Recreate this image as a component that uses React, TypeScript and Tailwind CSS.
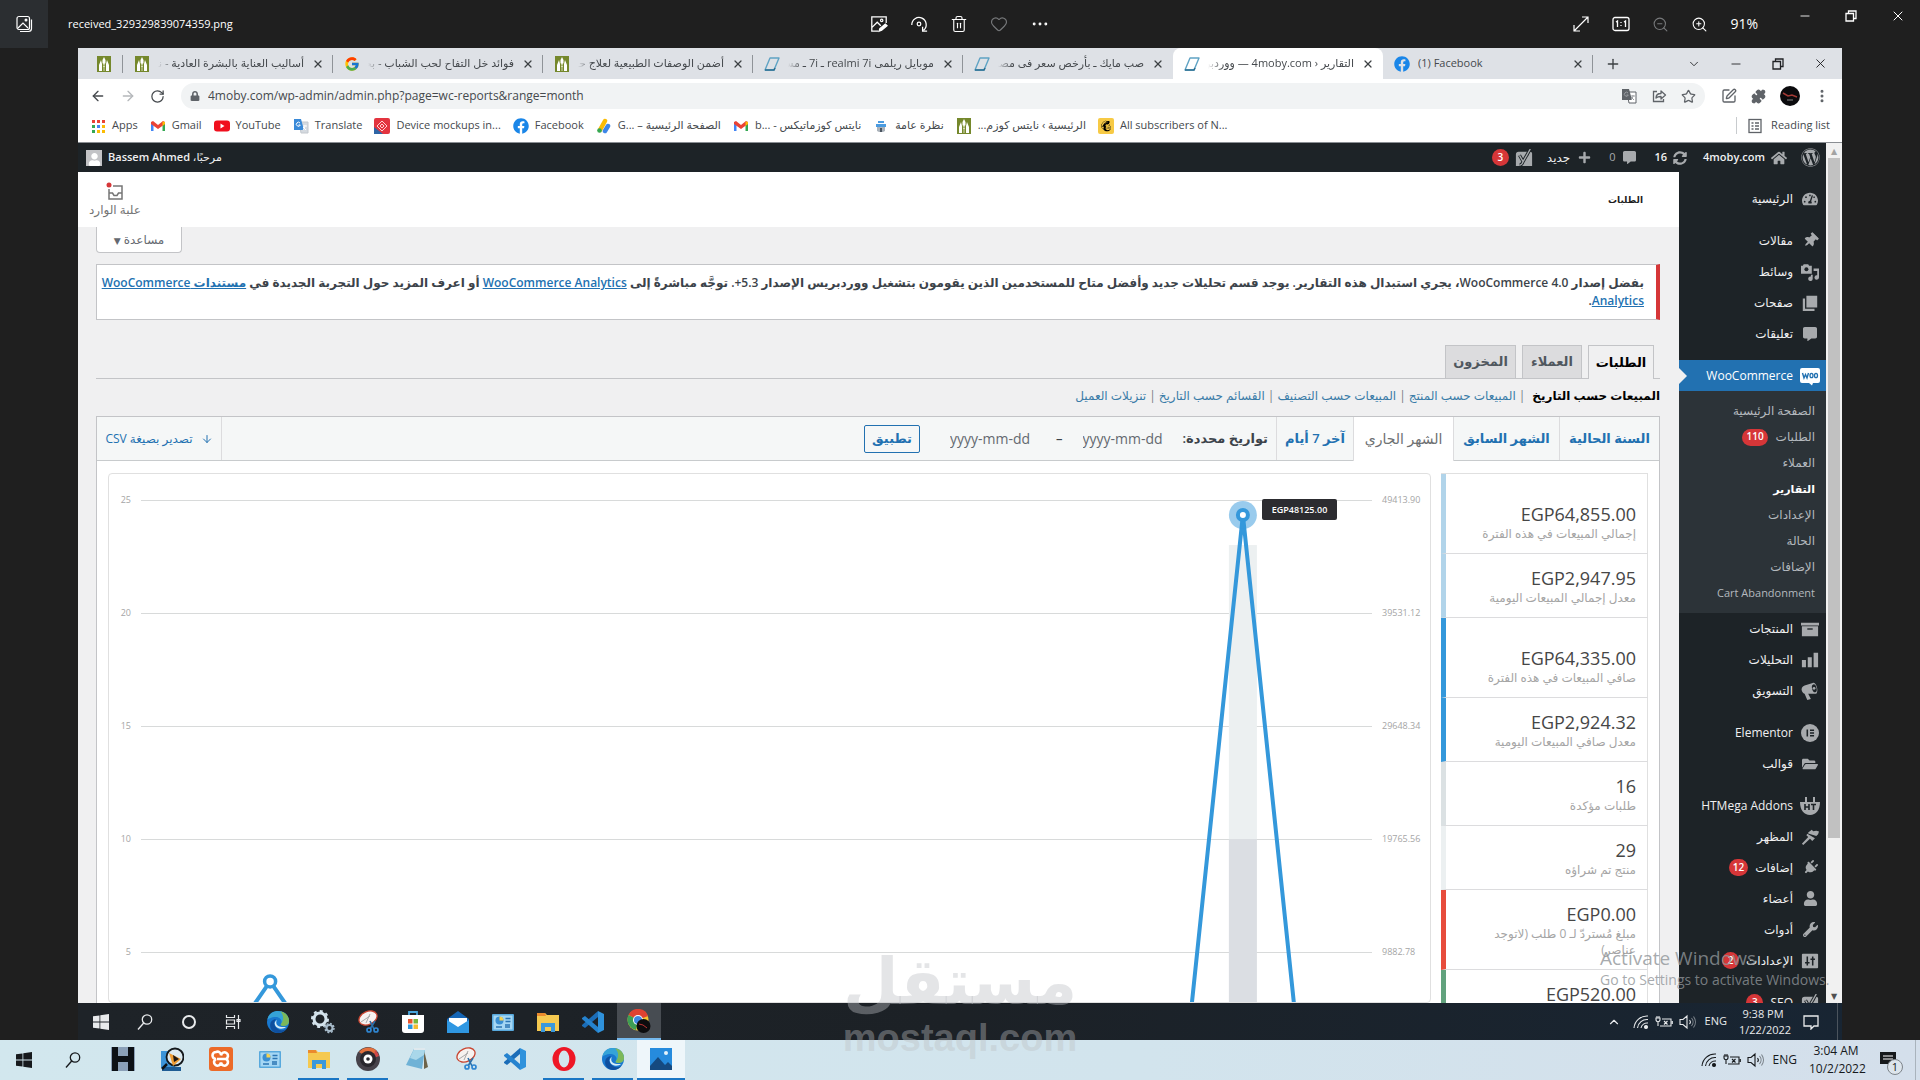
import React from 'react';
import {
  ArrowDown, ArrowLeft, ArrowRight, ChevronDown, ChevronUp, Heart, Minus, MoreHorizontal,
  MoreVertical, Plus, Puzzle, RotateCw, SquarePen, Star, Trash2, X, ZoomIn, ZoomOut,
} from 'lucide-react';
import {
  FaCommentAlt, FaFacebook, FaFolderOpen, FaHome, FaLock, FaMailchimp, FaPlug, FaPlus,
  FaSyncAlt, FaTachometerAlt, FaThumbtack, FaUser, FaWordpress, FaWrench,
} from 'react-icons/fa';
import { FcGoogle } from 'react-icons/fc';

type IconProps = { className?: string };

/* ---------- drawn icons ---------- */

const LeafIcon = ({ className = 'size-4' }: IconProps) => (
  <svg viewBox="0 0 16 16" className={className}>
    <rect x="1" width="14" height="16" fill="#75882c" />
    <path d="M8 1l1.500 3v3L8 9 6.500 7V4zM5 4l1 4v7H3V9zM11 4l-1 4v7h3V9z" fill="#fff" />
    <path d="M8 7v8M7 10l1 1 1-1" stroke="#d9dfb9" fill="none" />
  </svg>
);

const PhoneIcon = () => (
  <svg viewBox="0 0 16 16" className="size-4 shrink-0">
    <path d="M6 2h9l-5 12H1z" fill="none" stroke="#5fa3c4" strokeWidth="1.4" strokeLinejoin="round" />
    <path d="M1 14h9l1-2" fill="none" stroke="#2b6f91" strokeWidth="1.6" />
  </svg>
);

const GmailIcon = () => (
  <svg viewBox="0 0 16 16" className="size-4 shrink-0">
    <path d="M1 13V4h2.500v9z" fill="#4285f4" />
    <path d="M12.500 13V4H15v9z" fill="#34a853" />
    <path d="M1 4l2-1 5 4 5-4 2 1v2L8 11 1 6z" fill="#ea4335" />
    <path d="M12.500 3.500L15 4v2l-2.500 2z" fill="#fbbc04" />
  </svg>
);

const AppsIcon = () => (
  <svg viewBox="0 0 16 16" className="size-4 shrink-0">
    {['#ea4335', '#ea4335', '#ea4335', '#34a853', '#4285f4', '#fbbc04', '#34a853', '#fbbc04', '#fbbc04'].map((c, i) => (
      <rect key={i} x={2 + (i % 3) * 5} y={2 + Math.floor(i / 3) * 5} width="3" height="3" fill={c} />
    ))}
  </svg>
);

const YouTubeIcon = () => (
  <svg viewBox="0 0 16 16" className="size-4 shrink-0">
    <rect x="0" y="2.500" width="16" height="11" rx="3" fill="#f00f1d" />
    <path d="M6.500 5.500v5l4-2.500z" fill="#fff" />
  </svg>
);

const TranslateIcon = ({ gray = false }: { gray?: boolean }) => (
  <svg viewBox="0 0 16 16" className="size-4 shrink-0">
    <path d="M6 4h9v11H8z" fill={gray ? '#fff' : '#d5dae0'} stroke={gray ? '#5f6368' : '#c3c8ce'} />
    <path d="M1 1h7l3 11H1z" fill={gray ? '#5f6368' : '#3a8ad8'} />
    <path d="M7 5a2 2 0 1 0 .3 2H5.500M10 8h4M12 7c0 2-1 4-2 5m0-3c1 1 2 2 3 3" fill="none" stroke={gray ? '#9a9da1' : '#fff'} />
  </svg>
);

const MockupIcon = () => (
  <svg viewBox="0 0 16 16" className="size-4 shrink-0">
    <rect width="16" height="16" rx="2" fill="#e3343f" />
    <path d="M0 16V9l9 7z" fill="#2f65a5" />
    <path d="M8 3l5 5-5 5-5-5zM8 6l2 2-2 2-2-2z" fill="none" stroke="#ffd0d0" />
  </svg>
);

const AdsIcon = () => (
  <svg viewBox="0 0 16 16" className="size-4 shrink-0">
    <path d="M4 12L9 3" stroke="#fbbc04" strokeWidth="4.500" strokeLinecap="round" />
    <path d="M9 13l3-5" stroke="#3d87e8" strokeWidth="4.500" strokeLinecap="round" />
    <circle cx="3.500" cy="12.500" r="2.300" fill="#34a853" />
  </svg>
);

const ConsoleIcon = () => (
  <svg viewBox="0 0 16 16" className="size-4 shrink-0">
    <path d="M5 3h6v2H5zM3 6h10v3H3z" fill="#4a9be0" />
    <path d="M4 9h8v4l-2 1H6l-2-1z" fill="#aab2ba" />
    <path d="M7 10h2v4H7z" fill="#4a5560" />
  </svg>
);

const MailchimpIcon = () => (
  <span className="flex size-4 shrink-0 items-center justify-center rounded-xs bg-[#f7ca45]">
    <FaMailchimp className="size-3 text-black" />
  </span>
);

const ReadingIcon = () => (
  <svg viewBox="0 0 16 16" className="size-4" fill="none" stroke="#5f6368" strokeWidth="1.300">
    <rect x="2" y="1.500" width="12" height="13" />
    <path d="M4.500 5h2m1.500 0h4M4.500 8h2m1.500 0h4m-7.500 3h2m1.500 0h4" />
  </svg>
);

const ShareIcon = () => (
  <svg viewBox="0 0 16 16" className="size-4" fill="none" stroke="currentColor" strokeWidth="1.300">
    <path d="M6 3.500H2.500v10h10V11" />
    <path d="M5 10c0-3 2-4.500 5-4.500V3l4.500 4L10 11V8.500C8 8.500 6 9 5 10z" strokeLinejoin="round" />
  </svg>
);

const WindowsIcon = ({ className = 'size-4' }: IconProps) => (
  <svg viewBox="0 0 16 16" className={className} fill="currentColor">
    <path d="M0 2.300L6.500 1.400v6.200H0zM7.300 1.300L16 0v7.600H7.300zM0 8.400h6.500v6.200L0 13.700zM7.300 8.400H16V16l-8.700-1.300z" />
  </svg>
);

const FinderIcon = ({ className = 'size-4' }: IconProps) => (
  <svg viewBox="0 0 16 16" className={className} fill="none" stroke="currentColor" strokeWidth="1.300">
    <circle cx="10" cy="5.500" r="4.700" />
    <path d="M6.700 9L1 15.500" />
  </svg>
);

const TaskViewIcon = () => (
  <svg viewBox="0 0 16 16" className="size-4" fill="none" stroke="currentColor" strokeWidth="1.200">
    <path d="M1.500 1v2.500h8V1M1.500 15v-2.500h8V15M1.500 6h8v4h-8zM13.500 1v14M12 5.500h3v2h-3z" />
  </svg>
);

const EdgeIcon = () => (
  <svg viewBox="0 0 24 24" className="size-6">
    <circle cx="12" cy="12" r="11" fill="#1878cf" />
    <path d="M1.500 10C2 4 7 1 12 1c7 0 11 5 11 10 0 4-3 5-6 5-2 0-3-1-2-2 2-3-1-7-5-7-5 0-8 2-8.500 3z" fill="#35a3d8" />
    <path d="M14 1.200c6 1 9 5.300 9 9.800 0 4-3 5-6 5-2 0-3-1-2-2 3-4 3-9-1-12.800z" fill="#7cb85a" />
    <path d="M10 9c-3 3-2 9 4 11 4 1 6-1 7-2-3 5-9 6-13 4-5-3-5-10-1-12 1-.800 2-1 3-1z" fill="#0f4f9e" />
    <path d="M11 10c-2 3 0 7 5 7h4c-2 2-9 3-11-2-.800-2 0-4 2-5z" fill="#d8edf6" />
  </svg>
);

const GearsIcon = () => (
  <svg viewBox="0 0 24 24" className="size-6" fill="none">
    <circle cx="9" cy="9" r="6" stroke="#d4e3ec" strokeWidth="3" />
    <circle cx="9" cy="9" r="8" stroke="#d4e3ec" strokeWidth="2" strokeDasharray="3 3.200" />
    <circle cx="18.500" cy="18" r="3" stroke="#a8bccb" strokeWidth="2" />
    <circle cx="18.500" cy="18" r="4.500" stroke="#a8bccb" strokeWidth="1.500" strokeDasharray="2 1.500" />
  </svg>
);

const SnipIcon = () => (
  <svg viewBox="0 0 24 24" className="size-6" fill="none">
    <ellipse cx="12" cy="8" rx="9.500" ry="6.500" transform="rotate(-25 12 8)" fill="#f6f2f0" stroke="#c8442f" strokeWidth="1.300" />
    <path d="M5 12l9-6m-4 7l4-9" stroke="#a9a9a9" />
    <path d="M14 11l4 8M19 11l-5 8" stroke="#2b6fa8" strokeWidth="1.600" />
    <circle cx="13" cy="20" r="2" stroke="#2f86d1" strokeWidth="1.700" />
    <circle cx="20" cy="20" r="2" stroke="#2f86d1" strokeWidth="1.700" />
  </svg>
);

const StoreIcon = () => (
  <svg viewBox="0 0 24 24" className="size-6">
    <path d="M8 6V2h8v4" fill="none" stroke="#48a5dc" strokeWidth="1.800" />
    <path d="M1 5h22v15a3 3 0 0 1-3 3H4a3 3 0 0 1-3-3z" fill="#fff" />
    <path d="M7 9h4.500v4.500H7z" fill="#e8542d" />
    <path d="M12.500 9H17v4.500h-4.500z" fill="#79b63b" />
    <path d="M7 14.500h4.500V19H7z" fill="#2b95dd" />
    <path d="M12.500 14.500H17V19h-4.500z" fill="#f6bb2f" />
  </svg>
);

const MailIcon = () => (
  <svg viewBox="0 0 24 24" className="size-6">
    <path d="M1 9l11-8 11 8v14H1z" fill="#1565b5" />
    <path d="M3 8h18v10H3z" fill="#fff" />
    <path d="M1 10l11 7 11-7v13H1z" fill="#2f97e2" />
  </svg>
);

const PanelIcon = () => (
  <svg viewBox="0 0 24 24" className="size-6">
    <rect x="1" y="4" width="22" height="17" rx="1" fill="#58a9dd" />
    <rect x="2.500" y="5.500" width="19" height="14" fill="#a5d7f4" />
    <circle cx="8.500" cy="10.500" r="4" fill="#3a8fd3" />
    <path d="M8.500 10.500V6.500a4 4 0 0 1 4 4z" fill="#f5d252" />
    <path d="M14.500 8.500h5m-5 3h5M5 17h6m3-2h5m-5 2h5" stroke="#2b75b3" strokeWidth="1.300" />
  </svg>
);

const ExplorerIcon = () => (
  <svg viewBox="0 0 24 24" className="size-6">
    <path d="M1 3h8l2 2h12v16H1z" fill="#f5c950" />
    <path d="M1 3h8l1 3H1z" fill="#ea8a2d" />
    <path d="M5 22v-9h14v9h-4v-5H9v5z" fill="#3a98dc" />
  </svg>
);

const CodeIcon = () => (
  <svg viewBox="0 0 24 24" className="size-6">
    <path d="M17 1l6 3v16l-6 3z" fill="#2f92dc" />
    <path d="M17 1v6L4 18l-3-2v-1z" fill="#1b6db8" />
    <path d="M17 23v-6L4 6 1 8v1z" fill="#2583cf" />
  </svg>
);

const ChromeIcon = () => (
  <svg viewBox="0 0 24 24" className="size-6">
    <circle cx="11" cy="11" r="10.500" fill="#f3c22f" />
    <path d="M11 11L1.500 6A10.500 10.500 0 0 1 21 7z" fill="#df4232" />
    <path d="M11 11L1.500 6A10.500 10.500 0 0 0 9 21z" fill="#3d9d55" />
    <circle cx="11" cy="11" r="5" fill="#fff" />
    <circle cx="11" cy="11" r="4" fill="#3f86e0" />
    <circle cx="16.500" cy="17" r="7" fill="#0c0c0e" />
    <path d="M12 15l4 1 4 3" stroke="#b33" fill="none" />
  </svg>
);

const LetterIcon = () => (
  <svg viewBox="0 0 24 24" className="size-6">
    <rect width="24" height="24" fill="#8ba0b8" />
    <path d="M1 0h6v9h10V0h6v24h-6v-9H7v9H1z" fill="#0d1116" />
  </svg>
);

const LensIcon = () => (
  <svg viewBox="0 0 24 24" className="size-6">
    <path d="M1 4h14v17H1z" fill="#3c94d8" />
    <path d="M2 20h19v4H2z" fill="#1e5c94" />
    <path d="M7 17l-5 5" stroke="#0f1316" strokeWidth="2.500" />
    <circle cx="15" cy="10" r="8.500" fill="#dce9ef" stroke="#14181b" strokeWidth="1.800" />
    <path d="M9 6l12 6-8 7z" fill="#ee9c33" />
    <path d="M13 8l6 4-5 3z" fill="#1b1512" />
  </svg>
);

const XamppIcon = () => (
  <svg viewBox="0 0 24 24" className="size-6">
    <rect width="24" height="24" rx="3" fill="#ec6a28" />
    <path d="M7 5a3.500 3.500 0 0 1 5 3.500A3.500 3.500 0 1 1 17 12a3.500 3.500 0 1 1-5 3.500A3.500 3.500 0 1 1 7 12a3.500 3.500 0 0 1 0-7zM8 12h8" fill="none" stroke="#fff" strokeWidth="2.600" />
  </svg>
);

const DiscIcon = () => (
  <svg viewBox="0 0 24 24" className="size-6">
    <circle cx="12" cy="12" r="12" fill="#46424a" />
    <path d="M3 5A12 12 0 0 1 21 4l-3 4-12-1z" fill="#e3703c" />
    <path d="M19 3a12 12 0 0 1 4 6l-5 2z" fill="#cf4747" />
    <circle cx="12" cy="12" r="8" fill="#29272d" />
    <circle cx="12" cy="12" r="4.500" fill="#fff" />
    <circle cx="12" cy="12" r="1.800" fill="#29272d" />
  </svg>
);

const NoteIcon = () => (
  <svg viewBox="0 0 24 24" className="size-6">
    <path d="M19 3l4 17-4 2z" fill="#6d6349" />
    <path d="M9 2h11l-3 20L1 18z" fill="#6fb2d6" />
    <path d="M9 2h11l-1 6-8 5-6-2z" fill="#a9d7ea" />
    <path d="M9 2h11" stroke="#dfe9ee" strokeWidth="2" />
  </svg>
);

const OperaIcon = () => (
  <svg viewBox="0 0 24 24" className="size-6">
    <ellipse cx="12" cy="12" rx="11.500" ry="12" fill="#ee1726" />
    <ellipse cx="12" cy="12" rx="5.300" ry="8.500" fill="#d2e6ee" />
  </svg>
);

const PhotosIcon = () => (
  <svg viewBox="0 0 24 24" className="size-6">
    <rect x="1" y="1" width="22" height="22" fill="#268bdd" />
    <path d="M1 19l8-9 7 8 3-3 4 4v4H1z" fill="#154a80" />
    <circle cx="17" cy="6" r="2" fill="#e5f4fc" />
  </svg>
);

const WifiIcon = () => (
  <svg viewBox="0 0 16 16" className="size-4" fill="none" stroke="currentColor" strokeWidth="1.100">
    <path d="M1 14A13 13 0 0 1 15 2M4.500 14A9.500 9.500 0 0 1 15 5.500M8 14a6.500 6.500 0 0 1 7-5" />
    <circle cx="13" cy="13" r="1.500" fill="currentColor" />
  </svg>
);

const BatteryIcon = () => (
  <svg viewBox="0 0 18 16" className="h-4 w-[18px]" fill="none" stroke="currentColor" strokeWidth="1.100">
    <path d="M7 5h9v7H5M17.300 7v3M1 4v1.500c0 3 4 3 4 0V4zM2 2v2m2-2v2M3 8v4M9 7l3.500 3.500m0-3.500L9 10.500" />
  </svg>
);

const VolumeIcon = () => (
  <svg viewBox="0 0 18 16" className="h-4 w-[18px]" fill="none" stroke="currentColor" strokeWidth="1.100">
    <path d="M1 5.500h3L8 2v12l-4-3.500H1zM10.500 6a3 3 0 0 1 0 4" />
    <path d="M12.500 4a6 6 0 0 1 0 8M14.500 2.500a9 9 0 0 1 0 11" opacity=".5" />
  </svg>
);

const EditPhotoIcon = () => (
  <svg viewBox="0 0 20 20" className="size-[18px]" fill="none" stroke="currentColor" strokeWidth="1.400">
    <path d="M18 9V2H2v16h7M2 14l6-6 4 4" />
    <path d="M10 18l1-3 6-5 2 2-6 5z" fill="currentColor" />
    <circle cx="13" cy="6" r="1.300" />
  </svg>
);

const RotateIcon = () => (
  <svg viewBox="0 0 20 20" className="size-[18px]" fill="none" stroke="currentColor" strokeWidth="1.400">
    <path d="M2 11a8 8 0 1 1 13 6M14 13v5h5" />
    <circle cx="10" cy="10" r="2" />
  </svg>
);

const ExpandIcon = () => (
  <svg viewBox="0 0 18 18" className="size-[18px]" fill="none" stroke="currentColor" strokeWidth="1.200">
    <path d="M2 16L16 2M10 2h6v6M2 10v6h6" />
  </svg>
);

const ActualSizeIcon = () => (
  <svg viewBox="0 0 18 18" className="size-[18px]" fill="none" stroke="currentColor" strokeWidth="1.300">
    <rect x="1" y="2.500" width="16" height="13" rx="2" />
    <path d="M4 7l1.500-1v6M12 7l1.500-1v6M9 7v1m0 2v1" />
  </svg>
);

const RestoreIcon = () => (
  <svg viewBox="0 0 14 14" className="size-[14px]" fill="none" stroke="currentColor" strokeWidth="1.300">
    <path d="M2 4.500h7.500V12H2zM4.500 4.500V2H12v7.500H9.500" />
  </svg>
);

const GalleryIcon = () => (
  <svg viewBox="0 0 18 18" className="size-[18px]" fill="none" stroke="#fff" strokeWidth="1.200">
    <rect x="2" y="1.500" width="12.500" height="13" rx="2" />
    <path d="M16.500 4.500v9a3 3 0 0 1-3 3H5M3 13l5-5 5 5" />
    <circle cx="11" cy="5" r=".900" fill="#fff" />
  </svg>
);

const MediaIcon = () => (
  <svg viewBox="0 0 20 20" className="size-[18px]" fill="currentColor">
    <path d="M0 3h2l1-1.500h5L9 3h3v9H0z" />
    <circle cx="6" cy="7" r="2.200" fill="#1d2327" />
    <path d="M14 6h6v10a2.500 2.500 0 1 1-2-2.400V9h-4zM13 13v4.500a2.500 2.500 0 1 1-2-2.400V13z" />
  </svg>
);

const PagesIcon = () => (
  <svg viewBox="0 0 20 20" className="size-[18px]" fill="currentColor">
    <path d="M6 2h12v13H6zM2 5h2.500v11.500H15V19H2z" />
  </svg>
);

const WooIcon = () => (
  <svg viewBox="0 0 20 20" className="size-5">
    <path d="M2 2h16a2 2 0 0 1 2 2v11a2 2 0 0 1-2 2h-5l-1 2.500L9 17H2a2 2 0 0 1-2-2V4a2 2 0 0 1 2-2z" fill="#fff" />
    <path d="M2.500 7l1.500 5L5.500 8.500 7 12 8.500 7" fill="none" stroke="#2271b1" strokeWidth="1.400" />
    <ellipse cx="11.500" cy="9.500" rx="1.500" ry="2.200" fill="none" stroke="#2271b1" strokeWidth="1.300" />
    <ellipse cx="16" cy="9.500" rx="1.500" ry="2.200" fill="none" stroke="#2271b1" strokeWidth="1.300" />
  </svg>
);

const BarsIcon = () => (
  <svg viewBox="0 0 20 20" className="size-[18px]" fill="currentColor">
    <path d="M1 10h4.500v8H1zM7.500 7H12v11H7.500zM14 2h5v16h-5z" />
  </svg>
);

const HornIcon = () => (
  <svg viewBox="0 0 20 20" className="size-[18px]" fill="currentColor">
    <path d="M1 10c-1-2 0-5 3-6l9-3c4-1 7 9 4 12L8 13l3 6-4 1-3-7c-1 0-2-1-3-3z" />
    <ellipse cx="14.800" cy="7" rx="2.500" ry="4.500" transform="rotate(-15 14.800 7)" fill="#1d2327" />
    <circle cx="14.500" cy="7" r="1.500" />
  </svg>
);

const BrushIcon = () => (
  <svg viewBox="0 0 20 20" className="size-[18px]" fill="currentColor">
    <path d="M8 5l4-3 1.500 1.500L17 3l3 1-1 3-2 2-9-3zM7 6.500l8.500 5-3 3L10 12l-7.500 7L1 17.500 8 10 6 8z" />
  </svg>
);

const ElementorIcon = () => (
  <svg viewBox="0 0 20 20" className="size-[18px]">
    <circle cx="10" cy="10" r="10" fill="currentColor" />
    <path d="M7 6v8M10 7h4.500M10 10h4.500M10 13h4.500" stroke="#1d2327" strokeWidth="1.700" />
  </svg>
);

const YoastIcon = () => (
  <svg viewBox="0 0 20 20" className="size-[18px]">
    <path d="M4 3h11v16H1V6a3 3 0 0 1 3-3zM16 3h1a2 2 0 0 1 2 2v14h-6z" fill="currentColor" />
    <path d="M5 7l4 7 8-14M9 14c-1 3-2 4-4 4" fill="none" stroke="#1d2327" strokeWidth="3.600" />
    <path d="M5 7l4 7 8-14M9 14c-1 3-2 4-4 4" fill="none" stroke="currentColor" strokeWidth="1.500" />
  </svg>
);

const HtIcon = () => (
  <svg viewBox="0 0 20 20" className="size-5">
    <path d="M5 1h2v5h6V1h2v5h5c0 8-4 13-10 13S0 14 0 6h5z" fill="#a7aaad" />
    <path d="M5 8v6m4-6v6m-4-3h4M11 8.500h5M13.500 8v6" stroke="#1d2327" strokeWidth="1.600" />
  </svg>
);

const SlidersIcon = () => (
  <svg viewBox="0 0 20 20" className="size-[18px]">
    <rect x="1" y="2" width="18" height="16" rx="1" fill="currentColor" />
    <path d="M7 5v10M13 5v10M4.500 12h5M10.500 8h5" stroke="#1d2327" strokeWidth="1.700" />
  </svg>
);

const InboxIcon = () => (
  <svg viewBox="0 0 20 20" className="size-5" fill="none" stroke="#757575" strokeWidth="1.500">
    <path d="M8 4h9v13H4V7M4 11h3.500l1.500 2.500h3l1.500-2.500H17" />
    <circle cx="4" cy="3" r="2.500" fill="#d63638" stroke="none" />
  </svg>
);

const ArchiveIcon = () => (
  <svg viewBox="0 0 20 20" className="size-[18px]" fill="currentColor">
    <path d="M0 3h20v3H0zM1 7h18v11H1z" />
    <path d="M7 10h6" stroke="#1d2327" strokeWidth="1.500" />
  </svg>
);

/* ---------- data ---------- */

const pageTabs = [
  { title: 'أساليب العناية بالبشرة العادية - نا', icon: <LeafIcon className="size-4 shrink-0" /> },
  { title: 'فوائد خل التفاح لحب الشباب - بحـ', icon: <FcGoogle className="size-4 shrink-0" /> },
  { title: 'أضمن الوصفات الطبيعية لعلاج حـ', icon: <LeafIcon className="size-4 shrink-0" /> },
  { title: 'موبايل ريلمى realmi 7i ـ 7i ـ مسا', icon: <PhoneIcon /> },
  { title: 'صب مايك ـ بأرخص سعر فى مصر', icon: <PhoneIcon /> },
];

const bookmarks = [
  { title: 'Apps', icon: <AppsIcon /> },
  { title: 'Gmail', icon: <GmailIcon /> },
  { title: 'YouTube', icon: <YouTubeIcon /> },
  { title: 'Translate', icon: <TranslateIcon /> },
  { title: 'Device mockups in...', icon: <MockupIcon /> },
  { title: 'Facebook', icon: <FaFacebook className="size-4 shrink-0 text-[#1a86e8]" /> },
  { title: 'الصفحة الرئيسية – G...\u200e', icon: <AdsIcon />, rtl: true },
  { title: 'نايتس كوزماتيكس - b...\u200e', icon: <GmailIcon />, rtl: true },
  { title: 'نظرة عامة', icon: <ConsoleIcon />, rtl: true },
  { title: 'الرئيسية › نايتس كوزم...', icon: <LeafIcon className="size-4 shrink-0" />, rtl: true },
  { title: 'All subscribers of N...', icon: <MailchimpIcon /> },
];

const submenu = ['الصفحة الرئيسية', 'الطلبات', 'العملاء', 'التقارير', 'الإعدادات', 'الحالة', 'الإضافات'];

type MenuEntry = { title: string; icon: React.ReactNode; count?: number };

const menuTop: MenuEntry[][] = [
  [{ title: 'الرئيسية', icon: <FaTachometerAlt size={16} /> }],
  [
    { title: 'مقالات', icon: <FaThumbtack size={15} className="rotate-45" /> },
    { title: 'وسائط', icon: <MediaIcon /> },
    { title: 'صفحات', icon: <PagesIcon /> },
    { title: 'تعليقات', icon: <FaCommentAlt size={14} /> },
  ],
];

const menuBottom: MenuEntry[][] = [
  [
    { title: 'المنتجات', icon: <ArchiveIcon /> },
    { title: 'التحليلات', icon: <BarsIcon /> },
    { title: 'التسويق', icon: <HornIcon /> },
  ],
  [
    { title: 'Elementor', icon: <ElementorIcon /> },
    { title: 'قوالب', icon: <FaFolderOpen size={16} /> },
  ],
  [
    { title: 'HTMega Addons', icon: <HtIcon /> },
    { title: 'المظهر', icon: <BrushIcon /> },
    { title: 'إضافات', icon: <FaPlug size={15} className="rotate-45" />, count: 12 },
    { title: 'أعضاء', icon: <FaUser size={15} /> },
    { title: 'أدوات', icon: <FaWrench size={15} /> },
    { title: 'الإعدادات', icon: <SlidersIcon />, count: 2 },
  ],
  [{ title: 'SEO', icon: <YoastIcon />, count: 3 }],
];

const legend = [
  { amount: 'EGP64,855.00', label: 'إجمالي المبيعات في هذه الفترة', box: 'h-20 border-l-[#b1d4ea] pt-7' },
  { amount: 'EGP2,947.95', label: 'معدل إجمالي المبيعات اليومية', box: 'h-16 border-l-[#b1d4ea] pt-3' },
  { amount: 'EGP64,335.00', label: 'صافي المبيعات في هذه الفترة', box: 'h-20 border-l-[#3498db] pt-7' },
  { amount: 'EGP2,924.32', label: 'معدل صافي المبيعات اليومية', box: 'h-16 border-l-[#3498db] pt-3' },
  { amount: '16', label: 'طلبات مؤكدة', box: 'h-16 border-l-[#dbe1e3] pt-3' },
  { amount: '29', label: 'منتج تم شراؤه', box: 'h-16 border-l-[#ecf0f1] pt-3' },
  { amount: 'EGP0.00', label: 'مبلغ مُستردّ لـ 0 طلب (لاتوجد عناصر)', box: 'h-20 border-l-[#e74c3c] pt-3' },
  { amount: 'EGP520.00', label: '', box: 'h-16 border-l-[#62a27d] pt-3' },
];

const gridRows = [
  ['25', '49413.90'],
  ['20', '39531.12'],
  ['15', '29648.34'],
  ['10', '19765.56'],
  ['5', '9882.78'],
];

/* ---------- photo viewer header ---------- */

const ViewerHeader = () => (
  <header className="relative flex h-12 shrink-0 items-center text-white">
    <button aria-label="Gallery" className="flex size-12 items-center justify-center bg-[#2b2e31]"><GalleryIcon /></button>
    <span className="ml-5 text-[11px]">received_329329839074359.png</span>
    <div className="absolute left-1/2 flex -translate-x-1/2 items-center gap-[22px]">
      <button aria-label="Edit"><EditPhotoIcon /></button>
      <button aria-label="Rotate"><RotateIcon /></button>
      <button aria-label="Delete"><Trash2 size={18} strokeWidth={1.500} /></button>
      <button aria-label="Favorite" className="text-[#77797b]"><Heart size={18} strokeWidth={1.500} /></button>
      <button aria-label="More"><MoreHorizontal size={20} strokeWidth={1.500} /></button>
    </div>
    <div className="ml-auto flex items-center gap-[22px]">
      <button aria-label="Full screen"><ExpandIcon /></button>
      <button aria-label="Actual size"><ActualSizeIcon /></button>
      <button aria-label="Zoom out" className="text-[#77797b]"><ZoomOut size={17} strokeWidth={1.500} /></button>
      <button aria-label="Zoom in"><ZoomIn size={17} strokeWidth={1.500} /></button>
      <span className="text-sm">91%</span>
    </div>
    <div className="mr-[14px] ml-10 flex items-center gap-8 self-start pt-2">
      <button aria-label="Minimize"><Minus size={14} strokeWidth={1.500} /></button>
      <button aria-label="Restore"><RestoreIcon /></button>
      <button aria-label="Close"><X size={16} strokeWidth={1.500} /></button>
    </div>
  </header>
);

/* ---------- chrome ---------- */

type TabProps = { title: string; icon: React.ReactNode; active?: boolean; divider?: boolean; dir?: 'rtl' | 'ltr' };

const Tab = ({ title, icon, active = false, divider = true, dir = 'rtl' }: TabProps) => (
  <div className={`flex h-full w-[210px] min-w-0 items-center pl-[11px] ${active ? 'rounded-t-lg bg-white' : ''}`}>
    {icon}
    <span
      dir={dir}
      className={`mx-2 flex-1 overflow-hidden whitespace-nowrap text-[#45494d] ${dir === 'rtl' ? 'mask-l-from-90%' : ''}`}
    >
      {title}
    </span>
    <button aria-label={`Close ${title}`} className="mr-2"><X size={12} strokeWidth={2.500} className="text-[#3c4043]" /></button>
    <span className={`h-[18px] w-px ${divider ? 'bg-[#8f9398]' : ''}`} />
  </div>
);

const Chrome = () => (
  <>
    <div className="flex h-[31px] shrink-0 items-center bg-[#dee1e6] text-[11px]">
      <div className="flex w-[45px] items-center justify-end gap-[10px]">
        <LeafIcon />
        <span className="h-[18px] w-px bg-[#8f9398]" />
      </div>
      {pageTabs.map((t, i) => <Tab key={t.title} {...t} divider={i < 4} />)}
      <Tab title="التقارير ‹ 4moby.com — ووردبر" icon={<PhoneIcon />} active divider={false} />
      <Tab title="(1) Facebook" icon={<FaFacebook className="size-4 shrink-0 text-[#1a86e8]" />} dir="ltr" />
      <button aria-label="New tab" className="ml-3"><Plus size={16} strokeWidth={2} className="text-[#3c4043]" /></button>
      <div className="mr-[14px] ml-auto flex items-center gap-7 text-[#202124]">
        <button aria-label="Search tabs"><ChevronDown size={14} strokeWidth={1.500} /></button>
        <button aria-label="Minimize window"><Minus size={14} strokeWidth={1.500} /></button>
        <button aria-label="Restore window"><RestoreIcon /></button>
        <button aria-label="Close window"><X size={15} strokeWidth={1.500} /></button>
      </div>
    </div>
    <div className="flex h-[34px] shrink-0 items-center gap-4 bg-white px-3 text-[#5f6368]">
      <div className="flex gap-[14px]">
        <button aria-label="Back"><ArrowLeft size={16} className="text-[#45494d]" /></button>
        <button aria-label="Forward"><ArrowRight size={16} className="text-[#b5b8bb]" /></button>
        <button aria-label="Reload"><RotateCw size={15} className="text-[#45494d]" /></button>
      </div>
      <div className="flex h-[26px] flex-1 items-center rounded-full bg-[#f1f3f4] px-[9px]">
        <FaLock size={10} className="shrink-0" />
        <input
          aria-label="Address"
          className="ml-2 flex-1 bg-transparent text-xs text-[#45494d] outline-none"
          defaultValue="4moby.com/wp-admin/admin.php?page=wc-reports&range=month"
        />
        <div className="flex gap-[14px]">
          <button aria-label="Translate page"><TranslateIcon gray /></button>
          <button aria-label="Share"><ShareIcon /></button>
          <button aria-label="Bookmark"><Star size={15} /></button>
        </div>
      </div>
      <div className="flex items-center gap-[14px]">
        <button aria-label="Notes"><SquarePen size={16} /></button>
        <button aria-label="Extensions"><Puzzle size={15} fill="currentColor" /></button>
        <button aria-label="Profile">
          <svg viewBox="0 0 20 20" className="size-5">
            <circle cx="10" cy="10" r="10" fill="#0b0b0d" />
            <path d="M3 7l5 3 4-1 5 2" stroke="#a23a35" fill="none" strokeWidth="1.500" />
            <path d="M7 14h6" stroke="#888" />
          </svg>
        </button>
        <button aria-label="Menu"><MoreVertical size={16} strokeWidth={2.500} /></button>
      </div>
    </div>
    <nav className="flex h-[30px] shrink-0 items-center gap-3 border-b border-[#8a8e93] bg-white px-3 pb-1 text-[11px] text-[#45494d]">
      {bookmarks.map((b) => (
        <a key={b.title} href="#" className="flex items-center gap-[6px] whitespace-nowrap">
          {b.icon}
          <span dir={b.rtl ? 'rtl' : 'ltr'}>{b.title}</span>
        </a>
      ))}
      <button className="ml-auto flex items-center gap-2 border-l border-[#c8cbce] pl-[10px]"><ReadingIcon />Reading list</button>
    </nav>
  </>
);

/* ---------- wp admin ---------- */

const Count = ({ n }: { n: number }) => (
  <span className="flex h-[17px] min-w-[17px] items-center justify-center rounded-full bg-[#d63638] px-1 text-[10px] font-semibold text-white">{n}</span>
);

const AdminBar = () => (
  <div className="flex h-[29px] shrink-0 items-center bg-[#1d2327] pr-[6px] pl-2 text-[11px] font-semibold text-[#f0f0f1]">
    <FaWordpress size={19} className="text-[#a7aaad]" />
    <a href="#" className="mr-[14px] flex items-center gap-[6px]"><FaHome size={16} className="text-[#a7aaad]" />4moby.com</a>
    <a href="#" className="mr-4 flex items-center gap-[6px]"><FaSyncAlt size={14} className="text-[#a7aaad]" />16</a>
    <a href="#" className="mr-[18px] flex items-center gap-2 font-normal text-[#a7aaad]"><FaCommentAlt size={13} />0</a>
    <a href="#" className="mr-[18px] flex items-center gap-2 text-xs font-normal"><FaPlus size={13} className="text-[#a7aaad]" />جديد</a>
    <a href="#" className="mr-[14px] flex items-center gap-[6px]"><span className="text-[#a7aaad]"><YoastIcon /></span><Count n={3} /></a>
    <a href="#" className="mr-auto flex items-center gap-[6px]">
      <span><span className="font-normal">مرحبًا،</span> Bassem Ahmed</span>
      <span className="flex size-4 items-end justify-center overflow-hidden bg-[#c3c4c7]"><FaUser size={13} className="text-white" /></span>
    </a>
  </div>
);

const MenuGroup = ({ items }: { items: MenuEntry[] }) => (
  <ul>
    {items.map((m) => (
      <li key={m.title}>
        <a href="#" className="flex h-[31px] items-center gap-[7px] px-[6px] text-[#f0f0f1]">
          <span className="flex w-5 justify-center text-[#a7aaad]">{m.icon}</span>
          <span>{m.title}</span>
          {m.count && <Count n={m.count} />}
        </a>
      </li>
    ))}
  </ul>
);

const Sidebar = () => (
  <nav className="w-[147px] shrink-0 space-y-[11px] bg-[#1d2327] pt-[11px] text-xs">
    {menuTop.map((g, i) => <MenuGroup key={i} items={g} />)}
    <div>
      <a href="#" className="relative flex h-[31px] items-center gap-[7px] bg-[#2271b1] px-[6px] text-white">
        <WooIcon />
        WooCommerce
        <span className="absolute top-1/2 left-0 -translate-y-1/2 border-y-8 border-l-8 border-y-transparent border-l-[#f0f0f1]" />
      </a>
      <ul className="bg-[#2c3338] py-[7px] text-[#b4b9be]">
        {submenu.map((s) => (
          <li key={s} className="flex h-[26px] items-center gap-2 px-[11px]">
            <a href="#" className={s === 'التقارير' ? 'text-[11px] font-bold text-white' : ''}>{s}</a>
            {s === 'الطلبات' && <Count n={110} />}
          </li>
        ))}
        <li className="flex h-[26px] items-center px-[11px] text-[11px]"><a href="#">Cart Abandonment</a></li>
      </ul>
      <MenuGroup items={menuBottom[0]} />
    </div>
    {menuBottom.slice(1).map((g, i) => <MenuGroup key={i} items={g} />)}
  </nav>
);

const Chart = () => (
  <div dir="ltr" className="relative mr-[10px] ml-[11px] min-w-0 flex-1 overflow-hidden rounded-sm border border-[#e0e0e0] pt-[17px] text-[9px] text-[#a5a5a5]">
    {gridRows.map(([left, right]) => (
      <div key={left} className="mb-[95px] flex h-[18px] items-center gap-[10px]">
        <span className="w-[22px] text-right">{left}</span>
        <span className="h-px flex-1 bg-[#d8dada]" />
        <span className="w-12">{right}</span>
      </div>
    ))}
    <svg viewBox="0 0 1230 528" preserveAspectRatio="xMidYMin slice" className="absolute top-px left-8 h-[528px] w-[calc(100%-90px)]">
      <rect x="1087" y="70" width="28" height="294" fill="#ecf0f1" />
      <rect x="1087" y="364" width="28" height="164" fill="#dbdee3" />
      <path d="M1050 528L1101 40l51 488" fill="none" stroke="#3498db" strokeWidth="4" strokeLinejoin="round" />
      <path d="M111 532l18-26 18 26" fill="none" stroke="#3498db" strokeWidth="4" />
      <circle cx="1101" cy="40" r="14" fill="#3498db" opacity=".5" />
      <circle cx="1101" cy="40" r="5" fill="#fff" stroke="#3498db" strokeWidth="4" />
      <circle cx="129" cy="506" r="5.500" fill="#fff" stroke="#3498db" strokeWidth="3.500" />
    </svg>
    <span className="absolute top-[25px] right-[93px] flex h-[21px] w-[75px] items-center justify-center rounded-xs bg-[#2c2c30] text-[9px] font-semibold text-white">
      EGP48125.00
    </span>
  </div>
);

const Report = () => (
  <section className="flex min-h-0 flex-1 flex-col border border-b-0 border-[#c3c4c7] bg-white">
    <div className="flex h-11 shrink-0 items-stretch border-b border-[#c8cbcd] bg-[#f5f7f7] text-[13px] font-semibold whitespace-nowrap text-[#2271b1]">
      <a href="#" className="flex w-[100px] items-center justify-center border-l border-[#dcdcde]">السنة الحالية</a>
      <a href="#" className="flex w-[105px] items-center justify-center">الشهر السابق</a>
      <a href="#" className="-mb-px flex w-[101px] items-center justify-center border-x border-[#dcdcde] bg-white text-sm font-normal text-[#6d7072]">الشهر الجاري</a>
      <a href="#" className="flex w-[77px] items-center justify-center border-l border-[#dcdcde]">آخر 7 أيام</a>
      <form className="flex items-center pr-2 text-[#3c434a]">
        <label htmlFor="from">تواريخ محددة:</label>
        <input id="from" dir="ltr" placeholder="yyyy-mm-dd" className="mr-[14px] w-[86px] bg-transparent text-sm font-normal placeholder:text-[#646970]" />
        <span className="mx-5">–</span>
        <input aria-label="إلى" dir="ltr" placeholder="yyyy-mm-dd" className="w-[86px] bg-transparent text-sm font-normal placeholder:text-[#646970]" />
        <button type="button" className="mr-[30px] h-7 w-14 rounded-xs border border-[#2271b1] text-[#2271b1]">تطبيق</button>
      </form>
      <a href="#" className="mr-auto flex w-[125px] items-center justify-center gap-2 border-r border-[#dcdcde] text-xs font-normal">
        <ArrowDown size={12} strokeWidth={2} />
        <span>تصدير بصيغة CSV</span>
      </a>
    </div>
    <div className="flex min-h-0 flex-1 pt-3 pr-[11px]">
      <ul className="w-[207px] shrink-0 overflow-hidden border-t border-[#e0e0e0]">
        {legend.map((l) => (
          <li key={l.amount} className={`border-r border-b border-l-[5px] border-r-[#e0e0e0] border-b-[#dcdcde] pr-[11px] pl-6 ${l.box}`}>
            <strong className="block text-lg leading-6 font-normal text-[#464646]">{l.amount}</strong>
            <span className="block text-xs leading-4 text-[#a5a5a5]">{l.label}</span>
          </li>
        ))}
      </ul>
      <Chart />
    </div>
  </section>
);

const subLinks = ['المبيعات حسب المنتج', 'المبيعات حسب التصنيف', 'القسائم حسب التاريخ', 'تنزيلات العميل'];

const Content = () => (
  <main className="flex min-w-0 flex-1 flex-col bg-[#f0f0f1]">
    <div className="flex h-[55px] shrink-0 items-center justify-between bg-white pr-9 pl-[11px]">
      <h1 className="text-[9px] font-bold text-[#1e1e1e]">الطلبات</h1>
      <button className="flex flex-col items-center text-xs leading-4 text-[#757575]"><InboxIcon />علبة الوارد</button>
    </div>
    <div className="flex min-h-0 flex-1 flex-col pr-[19px] pl-[18px]">
      <button className="mr-auto h-[26px] w-[86px] shrink-0 rounded-b-sm border border-t-0 border-[#c3c4c7] bg-white text-xs text-[#646970]">
        مساعدة <span className="text-[9px]">▼</span>
      </button>
      <p className="mt-[11px] shrink-0 border border-r-4 border-[#c3c4c7] border-r-[#d63638] bg-white py-[9px] pr-3 text-xs leading-[18px] font-semibold whitespace-nowrap text-[#3c434a]">
        بفضل إصدار WooCommerce 4.0، يجري استبدال هذه التقارير. يوجد قسم تحليلات جديد وأفضل متاح للمستخدمين الذين يقومون بتشغيل ووردبريس الإصدار 5.3+. توجَّه مباشرةً إلى{' '}
        <a href="#" className="text-[#2271b1] underline">WooCommerce Analytics</a> أو اعرف المزيد حول التجربة الجديدة في{' '}
        <a href="#" className="text-[#2271b1] underline">مستندات WooCommerce<br />Analytics</a>.
      </p>
      <nav className="mt-[25px] flex shrink-0 items-end gap-[6px] border-b border-[#c3c4c7] pr-[6px] text-[13px] font-semibold text-[#50575e]">
        <a href="#" className="-mb-px flex h-[34px] w-[66px] items-center justify-center border border-b-0 border-[#c3c4c7] bg-[#f0f0f1] text-black">الطلبات</a>
        <a href="#" className="flex h-[33px] w-[60px] items-center justify-center border border-b-0 border-[#c3c4c7] bg-[#dcdcde]">العملاء</a>
        <a href="#" className="flex h-[33px] w-[71px] items-center justify-center border border-b-0 border-[#c3c4c7] bg-[#dcdcde]">المخزون</a>
      </nav>
      <div className="flex h-[37px] shrink-0 items-center gap-[3px] pb-1 text-xs text-[#3a7ca8]">
        <a href="#" className="ml-1 font-bold text-black">المبيعات حسب التاريخ</a>
        {subLinks.map((s) => (
          <React.Fragment key={s}>
            <span className="text-[#787c82]">|</span>
            <a href="#">{s}</a>
          </React.Fragment>
        ))}
      </div>
      <Report />
    </div>
  </main>
);

/* ---------- taskbars ---------- */

const Tray = () => (
  <div className="flex items-center gap-[6px]">
    <WifiIcon /><BatteryIcon /><VolumeIcon />
  </div>
);

const darkIcons = [<EdgeIcon />, <GearsIcon />, <SnipIcon />, <StoreIcon />, <MailIcon />, <PanelIcon />, <ExplorerIcon />, <CodeIcon />];

const DarkTaskbar = () => (
  <footer className="flex h-[37px] shrink-0 items-center bg-linear-to-r from-[#1e2328] via-[#1c2126] to-[#182533] text-[11px] text-[#e8eaec]">
    <button aria-label="Start" className="flex w-[45px] justify-center"><WindowsIcon /></button>
    <button aria-label="Search" className="flex w-11 justify-center"><FinderIcon /></button>
    <button aria-label="Cortana" className="flex w-11 justify-center"><span className="size-[14px] rounded-full border-2" /></button>
    <button aria-label="Task view" className="flex w-11 justify-center"><TaskViewIcon /></button>
    {darkIcons.map((icon, i) => <button key={i} aria-label={`App ${i + 1}`} className="flex w-[45px] justify-center">{icon}</button>)}
    <button aria-label="Browser" className="ml-[2px] flex h-full w-11 items-center justify-center border-b-2 border-[#76b9ed] bg-[#474c52]"><ChromeIcon /></button>
    <div className="mr-1 ml-auto flex h-full items-center border-r border-[#4b545d] pr-[18px]">
      <ChevronUp size={14} className="mr-3" />
      <Tray />
      <span className="ml-2">ENG</span>
      <div className="mx-3 w-12 text-center leading-4 whitespace-nowrap"><div>9:38 PM</div><div>1/22/2022</div></div>
      <svg viewBox="0 0 16 16" className="ml-1 size-4" fill="none" stroke="currentColor" strokeWidth="1.300"><path d="M1 2h14v10h-4l-3 3v-3H1z" /></svg>
    </div>
  </footer>
);

const lightApps = [
  { name: 'Launcher', icon: <LetterIcon /> },
  { name: 'Viewer', icon: <LensIcon /> },
  { name: 'Server', icon: <XamppIcon /> },
  { name: 'Control panel', icon: <PanelIcon /> },
  { name: 'Explorer', icon: <ExplorerIcon />, open: true },
  { name: 'Music', icon: <DiscIcon />, open: true },
  { name: 'Notepad', icon: <NoteIcon /> },
  { name: 'Snipping', icon: <SnipIcon /> },
  { name: 'Code', icon: <CodeIcon /> },
  { name: 'Opera', icon: <OperaIcon />, open: true },
  { name: 'Edge', icon: <EdgeIcon />, open: true },
];

const LightTaskbar = () => (
  <footer className="flex h-10 shrink-0 items-center bg-linear-to-r from-[#d2e7ee] via-[#d2e4ed] via-60% to-[#d4dfeb] text-xs text-[#16191c]">
    <button aria-label="Start menu" className="flex w-12 justify-center"><WindowsIcon /></button>
    <button aria-label="Find" className="flex w-[50px] justify-center"><FinderIcon /></button>
    {lightApps.map((a) => (
      <button
        key={a.name}
        aria-label={a.name}
        className={`mx-1 flex h-full w-[41px] items-center justify-center border-b-2 ${a.open ? 'border-[#1a76c4]' : 'border-transparent'}`}
      >
        {a.icon}
      </button>
    ))}
    <button aria-label="Photos" className="flex h-full w-12 items-center justify-center border-b-2 border-[#1a76c4] bg-[#eef6fa]"><PhotosIcon /></button>
    <div className="mr-1 ml-auto flex h-full items-center border-r border-[#a9b3bc] pr-[18px]">
      <Tray />
      <span className="ml-2">ENG</span>
      <div className="mx-3 w-[54px] text-center leading-[18px] whitespace-nowrap"><div>3:04 AM</div><div>10/2/2022</div></div>
      <span className="relative ml-1">
        <svg viewBox="0 0 18 18" className="size-[18px]"><path d="M1 1h16v12h-4v4l-4-4H1z" fill="#16191c" /><path d="M4 5h10M4 8h10" stroke="#fff" /></svg>
        <span className="absolute top-2 left-2 flex size-4 items-center justify-center rounded-full border border-[#7d848a] bg-[#dde5ec] text-[11px]">1</span>
      </span>
    </div>
  </footer>
);

export default function App() {
  return (
    <div className="relative flex h-screen flex-col overflow-hidden bg-[#1f1f1f] font-['Open_Sans','DejaVu_Sans',sans-serif]">
      <ViewerHeader />
      <div className="mx-[78px] flex min-h-0 flex-1 flex-col">
        <Chrome />
        <div className="flex min-h-0 flex-1">
          <div dir="rtl" className="flex min-w-0 flex-1 flex-col overflow-hidden">
            <AdminBar />
            <div className="flex min-h-0 flex-1">
              <Sidebar />
              <Content />
            </div>
          </div>
          <div className="flex w-4 shrink-0 flex-col items-center justify-between bg-[#f1f1f1] text-[8px] leading-[15px] text-[#505050]">
            <span className="text-[#a3a3a3]">▲</span>
            <span className="w-3 flex-1 bg-[#c1c1c1]" />
            <span className="h-[150px]" />
            <span>▼</span>
          </div>
        </div>
        <DarkTaskbar />
      </div>
      <LightTaskbar />

      {/* overlays */}
      <div className="pointer-events-none absolute right-[86px] bottom-[90px] w-[234px] whitespace-nowrap text-[#8f9498]/80">
        <p className="text-[19px] leading-6">Activate Windows</p>
        <p className="text-sm leading-5">Go to Settings to activate Windows.</p>
      </div>
      <div className="pointer-events-none absolute bottom-6 left-1/2 flex w-[230px] -translate-x-1/2 flex-col items-center font-bold whitespace-nowrap text-[#bcbfc2]/40">
        <p className="text-[64px] leading-[80px]">مستقل</p>
        <p className="font-['Liberation_Sans',sans-serif] text-[38px] leading-9">mostaql.com</p>
      </div>
    </div>
  );
}
